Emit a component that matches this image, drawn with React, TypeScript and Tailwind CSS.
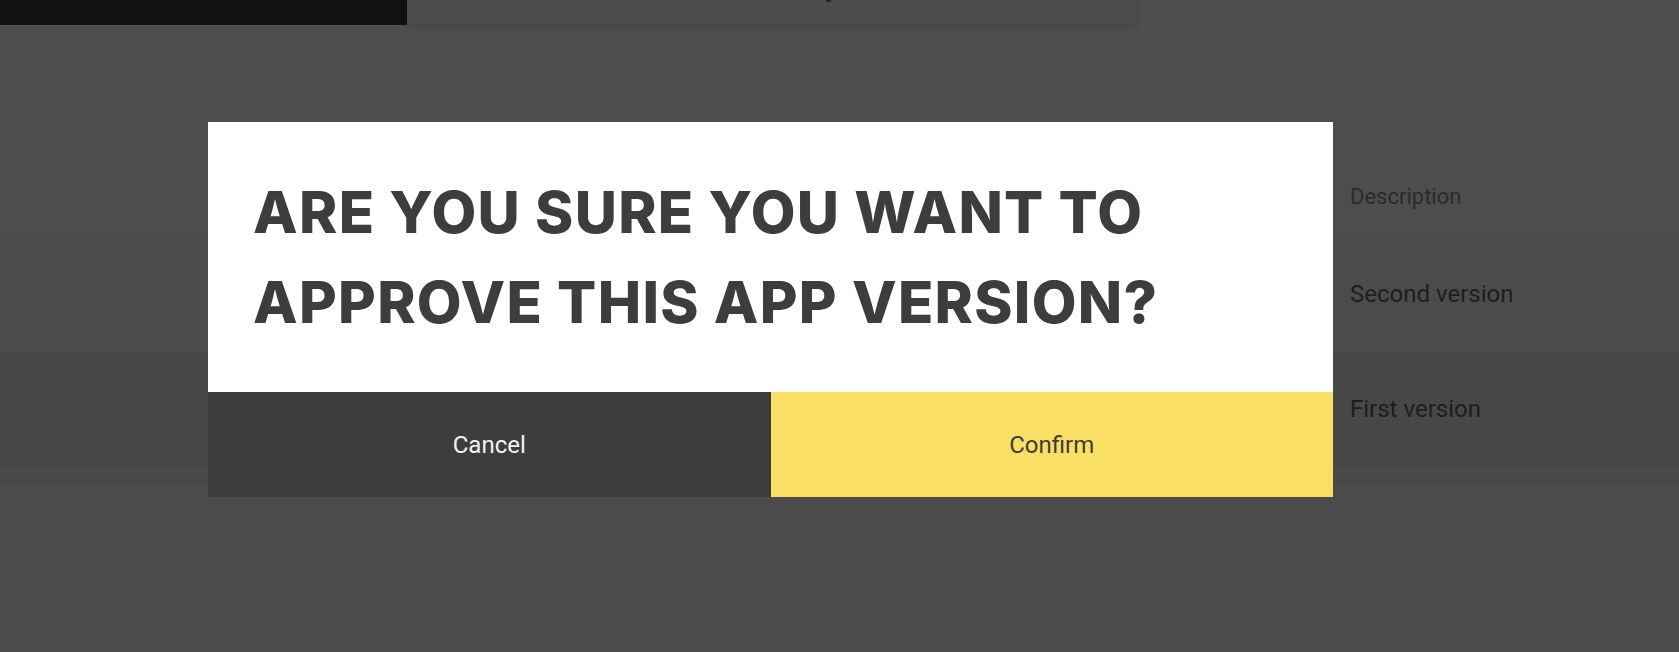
import React from "react";

export default function App() {
  return (
    <div
      className="relative w-full h-[652px] overflow-hidden bg-[#4e4e4e]"
      style={{ fontFamily: "Roboto, 'Liberation Sans', sans-serif" }}
    >
      {/* top bar */}
      <div className="flex h-[25px]">
        <div className="w-[407px] h-full bg-[#111111]" />
        <div className="relative w-[731px] h-full bg-[#4b4b4b] shadow-[0_2px_6px_rgba(0,0,0,0.12)]">
          <div className="absolute left-[419px] top-0 w-[5px] h-[2px] rounded-b-sm bg-[#1e1e1e]" />
        </div>
      </div>

      {/* table */}
      <div className="mt-[105px] flex flex-col">
        <div className="flex h-[107px] items-center bg-[#4d4d4d] pt-[26px] shadow-[0_1px_2px_rgba(0,0,0,0.08)]">
          <div className="flex-1" />
          <div className="w-[329px] text-[22px] text-[#2b2b2b]">Description</div>
        </div>
        <div className="flex h-[115px] items-center bg-[#4b4b4b] border-b border-[#474747]">
          <div className="flex-1" />
          <div className="w-[329px] text-[24px] text-[#1e1e1e]">Second version</div>
        </div>
        <div className="flex h-[114px] items-center bg-[#474747]">
          <div className="flex-1" />
          <div className="w-[329px] text-[24px] text-[#1e1e1e]">First version</div>
        </div>
        <div className="h-[16px] bg-[#4a4a4a] border-b border-[#424242]" />
        <div className="h-[200px] bg-[#4b4b4b]" />
      </div>

      {/* modal */}
      <div className="absolute left-[208px] top-[122px] w-[1125px] flex flex-col">
        <div className="bg-white px-[45px] pt-[45px] pb-[45px]">
          <h1
            className="text-[58px] leading-[90px] font-extrabold tracking-[1.3px] text-[#3f3d3b] uppercase"
            style={{ fontFamily: "Inter, 'Liberation Sans', sans-serif" }}
          >
            Are you sure you want to
            <br />
            approve this app version?
          </h1>
        </div>
        <div className="flex h-[105px]">
          <button className="flex-1 bg-[#3f3d3b] text-[24px] text-[#f2f2f2]">Cancel</button>
          <button className="flex-1 bg-[#f9e065] text-[24px] text-[#3f3d3b]">Confirm</button>
        </div>
      </div>
    </div>
  );
}
